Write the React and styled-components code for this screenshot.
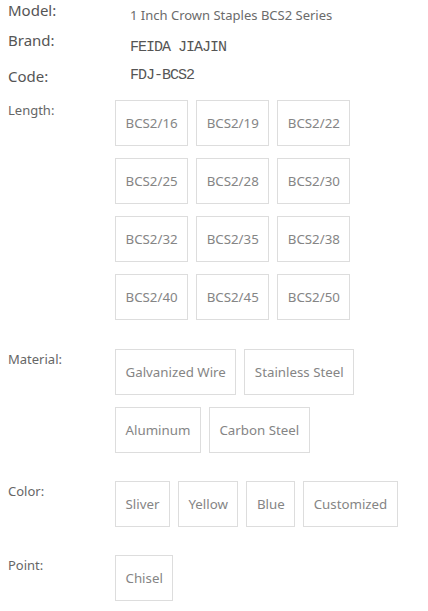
import React from "react"
import styled, { createGlobalStyle } from "styled-components"

const Global = createGlobalStyle`
  body {
    margin: 0;
    background: #fff;
    font-family: "Noto Sans", "Open Sans", sans-serif;
  }
`

const Page = styled.div`
  padding: 0 8px;
`

const InfoRow = styled.div`
  display: flex;
  height: ${p => p.h}px;
`

const InfoLabel = styled.div`
  width: 122px;
  flex: none;
  font-size: 15px;
  line-height: 20px;
  color: #555;
`

const InfoValue = styled.div`
  padding-top: ${p => p.top}px;
  font-size: 13px;
  line-height: 20px;
  color: #6b6b6b;
`

const MonoValue = styled.div`
  padding-top: ${p => p.top}px;
  font-family: "Liberation Mono", "DejaVu Sans Mono", monospace;
  font-size: 15px;
  letter-spacing: -1px;
  line-height: 20px;
  color: #555;
`

const Section = styled.div`
  display: grid;
  grid-template-columns: 107px 1fr;
  margin-top: ${p => p.top}px;
`

const Label = styled.div`
  font-size: 13px;
  line-height: 20px;
  color: #666;
`

const Options = styled.div`
  display: flex;
  flex-wrap: wrap;
  align-items: flex-start;
  column-gap: 8px;
  row-gap: 12px;
  max-width: ${p => p.max}px;
`

const Option = styled.div`
  box-sizing: border-box;
  height: 46px;
  padding: 0 9.5px;
  border: 1px solid #ddd;
  font-size: 13.3px;
  line-height: 44px;
  color: #858585;
  white-space: nowrap;
`

const lengths = [
  "BCS2/16", "BCS2/19", "BCS2/22",
  "BCS2/25", "BCS2/28", "BCS2/30",
  "BCS2/32", "BCS2/35", "BCS2/38",
  "BCS2/40", "BCS2/45", "BCS2/50",
]

const groups = [
  { label: "Length:", top: 11, max: 240, items: lengths },
  { label: "Material:", top: 29, max: 260, items: ["Galvanized Wire", "Stainless Steel", "Aluminum", "Carbon Steel"] },
  { label: "Color:", top: 28, max: 300, items: ["Sliver", "Yellow", "Blue", "Customized"] },
  { label: "Point:", top: 28, max: 300, items: ["Chisel"] },
]

export default function App() {
  return (
    <>
      <Global />
      <Page>
        <InfoRow h={30}>
          <InfoLabel>Model:</InfoLabel>
          <InfoValue top={5}>1 Inch Crown Staples BCS2 Series</InfoValue>
        </InfoRow>
        <InfoRow h={36}>
          <InfoLabel>Brand:</InfoLabel>
          <MonoValue top={8}>FEIDA JIAJIN</MonoValue>
        </InfoRow>
        <InfoRow h={23}>
          <InfoLabel>Code:</InfoLabel>
          <MonoValue top={0}>FDJ-BCS2</MonoValue>
        </InfoRow>
        {groups.map(g => (
          <Section key={g.label} top={g.top}>
            <Label>{g.label}</Label>
            <Options max={g.max}>
              {g.items.map(item => (
                <Option key={item}>{item}</Option>
              ))}
            </Options>
          </Section>
        ))}
      </Page>
    </>
  )
}
